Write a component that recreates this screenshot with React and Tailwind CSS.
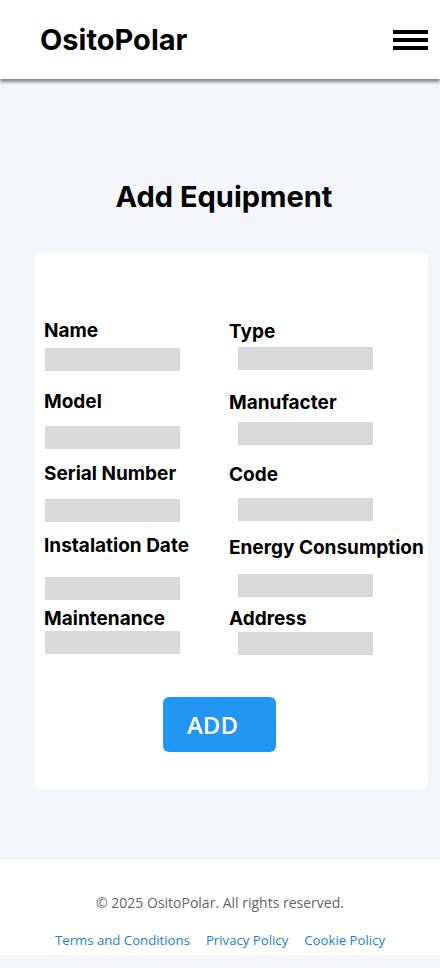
import React from 'react';

const leftFields = [
  { label: 'Name', inputTop: 'mt-[6px]', next: '' },
  { label: 'Model', inputTop: 'mt-[13px]', next: 'mt-[19px]' },
  { label: 'Serial Number', inputTop: 'mt-[14px]', next: 'mt-[13px]' },
  { label: 'Instalation Date', inputTop: 'mt-[20px]', next: 'mt-[12px]' },
  { label: 'Maintenance', inputTop: 'mt-[1px]', next: 'mt-[7px]' },
];

const rightFields = [
  { label: 'Type', inputTop: 'mt-[4px]', next: 'mt-px' },
  { label: 'Manufacter', inputTop: 'mt-[8px]', next: 'mt-[21px]' },
  { label: 'Code', inputTop: 'mt-[12px]', next: 'mt-[18px]' },
  { label: 'Energy Consumption', inputTop: 'mt-[15px]', next: 'mt-[15px]' },
  { label: 'Address', inputTop: 'mt-[2px]', next: 'mt-[10px]' },
];

const Field = ({ label, inputTop, next, inset }) => (
  <div className={next}>
    <label className="block text-[19px] leading-[23px] font-bold text-black whitespace-nowrap">
      {label}
    </label>
    <input
      type="text"
      className={`block w-[135px] h-[23px] bg-[#d9d9d9] border-0 outline-none ${inputTop} ${inset}`}
    />
  </div>
);

const App = () => {
  return (
    <div className="min-h-[968px] bg-[#f5f6fa] font-['Inter',sans-serif] flex flex-col">
      {/* Header */}
      <header className="h-[79px] bg-white flex items-center justify-between pl-10 pr-3 shadow-[0_3px_3px_rgba(0,0,0,0.45)] relative z-10">
        <h1 className="text-[29px] font-bold text-black">OsitoPolar</h1>
        <button type="button" className="flex flex-col gap-1 w-[35px]">
          <span className="block h-1 w-[35px] bg-black" />
          <span className="block h-1 w-[35px] bg-black" />
          <span className="block h-1 w-[35px] bg-black" />
        </button>
      </header>

      {/* Contenido */}
      <main className="flex-1">
        <h2 className="mt-[101px] pl-[8px] text-center text-[29px] leading-[34px] font-bold text-black">
          Add Equipment
        </h2>
        <div className="mt-[38px] ml-[35px] w-[393px] bg-white rounded-lg pt-[67px] pb-[37px]">
          <div className="grid grid-cols-[185px_1fr] pl-[9px]">
            <div className="flex flex-col">
              {leftFields.map((f) => (
                <Field key={f.label} {...f} inset="ml-px" />
              ))}
            </div>
            <div className="flex flex-col">
              {rightFields.map((f) => (
                <Field key={f.label} {...f} inset="ml-[9px]" />
              ))}
            </div>
          </div>
          <div className="flex justify-center mt-[42px] pr-[24px]">
            <button
              type="button"
              className="h-[55px] w-[113px] pl-[24px] text-left bg-[#2196f3] text-white rounded-md text-[24px] font-semibold font-['Open_Sans',sans-serif]"
            >
              ADD
            </button>
          </div>
        </div>
      </main>

      {/* Footer */}
      <footer className="mt-[68px] mb-[13px] h-[97px] bg-white border-t border-[#e8e8ec] font-['Open_Sans',sans-serif] flex flex-col items-center">
        <p className="mt-[34px] text-[14px] text-[#666666] leading-5">© 2025 OsitoPolar. All rights reserved.</p>
        <nav className="mt-[17px] flex gap-4 text-[13.2px] text-[#1e7fcf] leading-5">
          <a href="#">Terms and Conditions</a>
          <a href="#">Privacy Policy</a>
          <a href="#">Cookie Policy</a>
        </nav>
      </footer>
    </div>
  );
};

export default App;
